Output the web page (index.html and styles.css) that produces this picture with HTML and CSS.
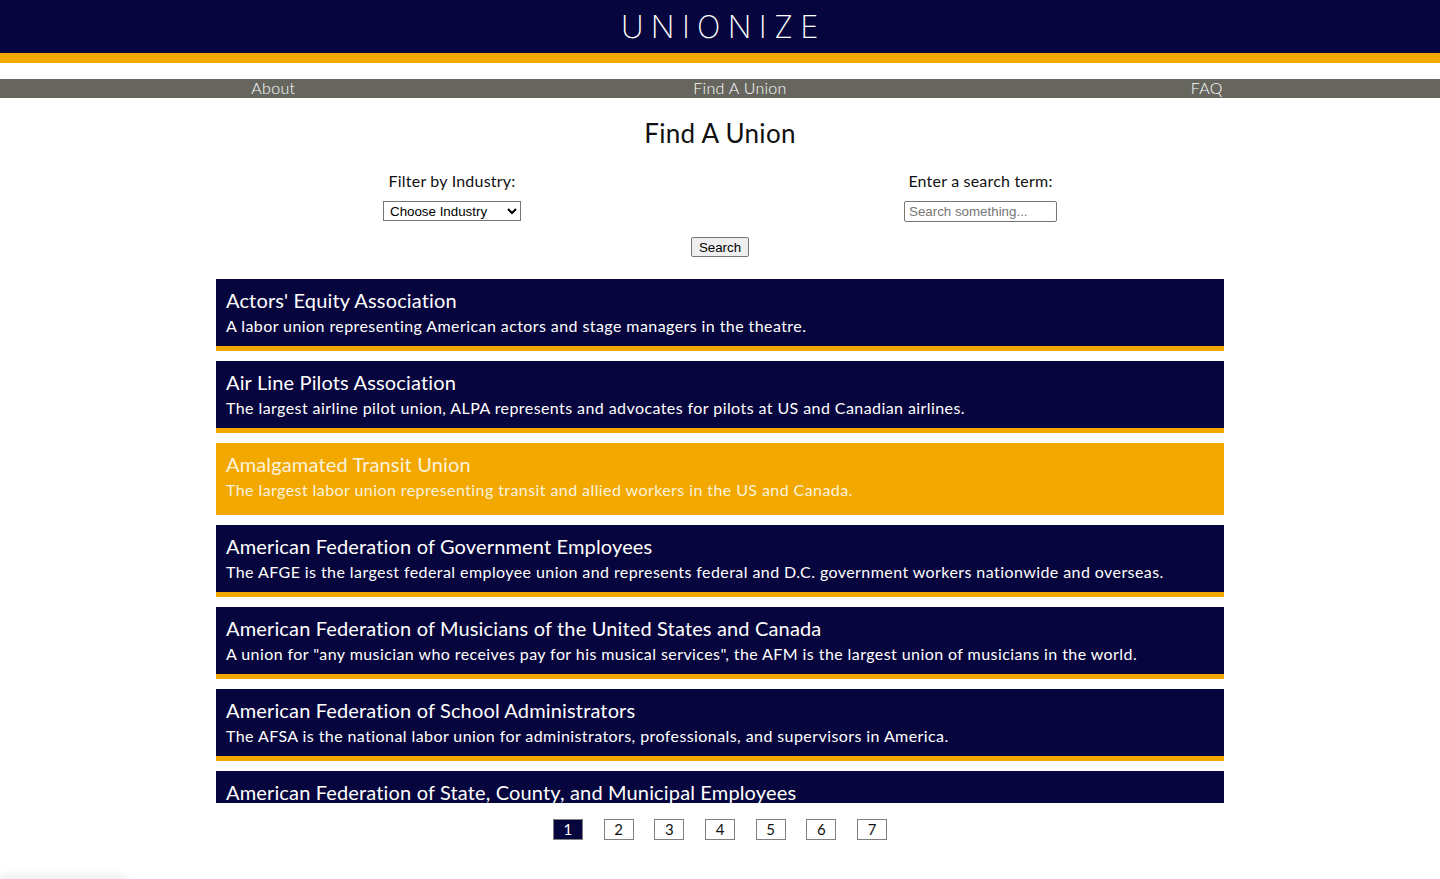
FILE: index.html
```html
<!DOCTYPE html>
<html lang="en">
<head>
<meta charset="utf-8">
<title>Unionize - Find A Union</title>
<link rel="stylesheet" href="styles.css">
</head>
<body>
<header class="site-header">
  <h1 class="logo">UNIONIZE</h1>
</header>
<nav class="nav">
  <ul class="nav-list">
    <li class="nav-item">About</li>
    <li class="nav-item">Find A Union</li>
    <li class="nav-item">FAQ</li>
  </ul>
</nav>
<main class="main">
  <h2 class="page-title">Find A Union</h2>
  <form class="filters">
    <div class="field">
      <label class="field-label" for="industry">Filter by Industry:</label>
      <select id="industry" class="select">
        <option>Choose Industry</option>
      </select>
    </div>
    <div class="field">
      <label class="field-label" for="term">Enter a search term:</label>
      <input id="term" class="input" type="text" placeholder="Search something...">
    </div>
  </form>
  <div class="search-row"><button class="search-btn" type="button">Search</button></div>
  <section class="union-list">
    <article class="union">
      <h3 class="union-name">Actors' Equity Association</h3>
      <p class="union-desc">A labor union representing American actors and stage managers in the theatre.</p>
    </article>
    <article class="union">
      <h3 class="union-name">Air Line Pilots Association</h3>
      <p class="union-desc">The largest airline pilot union, ALPA represents and advocates for pilots at US and Canadian airlines.</p>
    </article>
    <article class="union union-active">
      <h3 class="union-name">Amalgamated Transit Union</h3>
      <p class="union-desc">The largest labor union representing transit and allied workers in the US and Canada.</p>
    </article>
    <article class="union">
      <h3 class="union-name">American Federation of Government Employees</h3>
      <p class="union-desc">The AFGE is the largest federal employee union and represents federal and D.C. government workers nationwide and overseas.</p>
    </article>
    <article class="union">
      <h3 class="union-name">American Federation of Musicians of the United States and Canada</h3>
      <p class="union-desc">A union for "any musician who receives pay for his musical services", the AFM is the largest union of musicians in the world.</p>
    </article>
    <article class="union">
      <h3 class="union-name">American Federation of School Administrators</h3>
      <p class="union-desc">The AFSA is the national labor union for administrators, professionals, and supervisors in America.</p>
    </article>
    <article class="union union-partial">
      <h3 class="union-name">American Federation of State, County, and Municipal Employees</h3>
    </article>
  </section>
  <div class="pagination">
    <span class="page page-active">1</span>
    <span class="page">2</span>
    <span class="page">3</span>
    <span class="page">4</span>
    <span class="page">5</span>
    <span class="page">6</span>
    <span class="page">7</span>
  </div>
</main>
<div class="corner-shadow"></div>
</body>
</html>
```

FILE: styles.css
```css
* { box-sizing: border-box; }
html, body { margin: 0; padding: 0; }
body {
  font-family: "Lato", "Open Sans", sans-serif;
  color: #111;
  background: #fff;
  overflow: hidden;
  height: 879px;
}
.site-header {
  background: #07053d;
  height: 63px;
  border-bottom: 10px solid #f3a800;
}
.logo {
  margin: 0;
  text-align: center;
  color: #fff;
  font-family: "Inter", "Lato", sans-serif;
  font-weight: 200;
  font-size: 31px;
  letter-spacing: 7.3px;
  line-height: 53px;
  padding-left: 7px;
}
.nav {
  margin-top: 16px;
  background: #66665e;
}
.nav-list {
  list-style: none;
  margin: 0;
  padding: 0 0 0 40px;
  display: flex;
  height: 19px;
}
.nav-item {
  flex: 1;
  text-align: center;
  color: #fff;
  font-size: 16px;
  line-height: 18px;
  font-weight: 300;
  letter-spacing: 0.3px;
}
.main { display: flex; flex-direction: column; align-items: center; }
.page-title {
  margin: 19px 0 0;
  font-weight: 400;
  font-size: 26px;
  line-height: 32px;
  letter-spacing: 0.3px;
}
.filters {
  margin-top: 22px;
  width: 100%;
  display: flex;
  justify-content: space-evenly;
}
.field { display: flex; flex-direction: column; align-items: center; }
.field-label {
  font-size: 16px;
  line-height: 19px;
  margin-bottom: 11px;
  letter-spacing: 0.2px;
}
.select {
  font-family: "Liberation Sans", Arial, sans-serif;
  font-size: 13.33px;
  width: 138px;
  height: 20px;
  border: 1px solid #767676;
  border-radius: 0;
  background: #fff;
  padding: 0 2px;
}
.input {
  font-family: "Liberation Sans", Arial, sans-serif;
  font-size: 13.33px;
  width: 153px;
  height: 21px;
  border: 1px solid #767676;
  border-radius: 2px;
  padding: 1px 4px;
}
.input::placeholder { color: #757575; }
.search-row { margin-top: 15px; display: flex; }
.search-btn {
  font-family: "Liberation Sans", Arial, sans-serif;
  font-size: 13.33px;
  height: 20px;
  width: 58px;
  padding: 0;
  border: 1px solid #767676;
  border-radius: 2px;
  background: #efefef;
  color: #000;
}
.union-list {
  margin-top: 22px;
  width: 1008px;
  height: 524px;
  overflow: hidden;
  display: flex;
  flex-direction: column;
  gap: 10px;
}
.union {
  flex: none;
  background: #07053d;
  border-bottom: 5px solid #f3a800;
  padding: 9px 10px 10px;
  height: 72px;
  color: #fff;
}
.union-active { background: #f3a800; color: #fbf3dc; }
.union-name {
  margin: 0 0 4px;
  font-size: 20px;
  line-height: 24px;
  font-weight: 400;
  letter-spacing: 0.15px;
}
.union-desc {
  margin: 0;
  font-size: 16px;
  line-height: 20px;
  font-weight: 400;
  letter-spacing: 0.42px;
}
.pagination {
  margin-top: 16px;
  display: flex;
  gap: 20.7px;
}
.page {
  width: 30px;
  height: 21px;
  border: 1px solid #808080;
  text-align: center;
  font-size: 15px;
  line-height: 19px;
  color: #111;
}
.page-active { background: #07053d; color: #fff; }
.corner-shadow {
  position: absolute;
  left: 0;
  bottom: -6px;
  width: 125px;
  height: 6px;
  box-shadow: 0 -2px 8px rgba(0,0,0,0.12);
}
```
